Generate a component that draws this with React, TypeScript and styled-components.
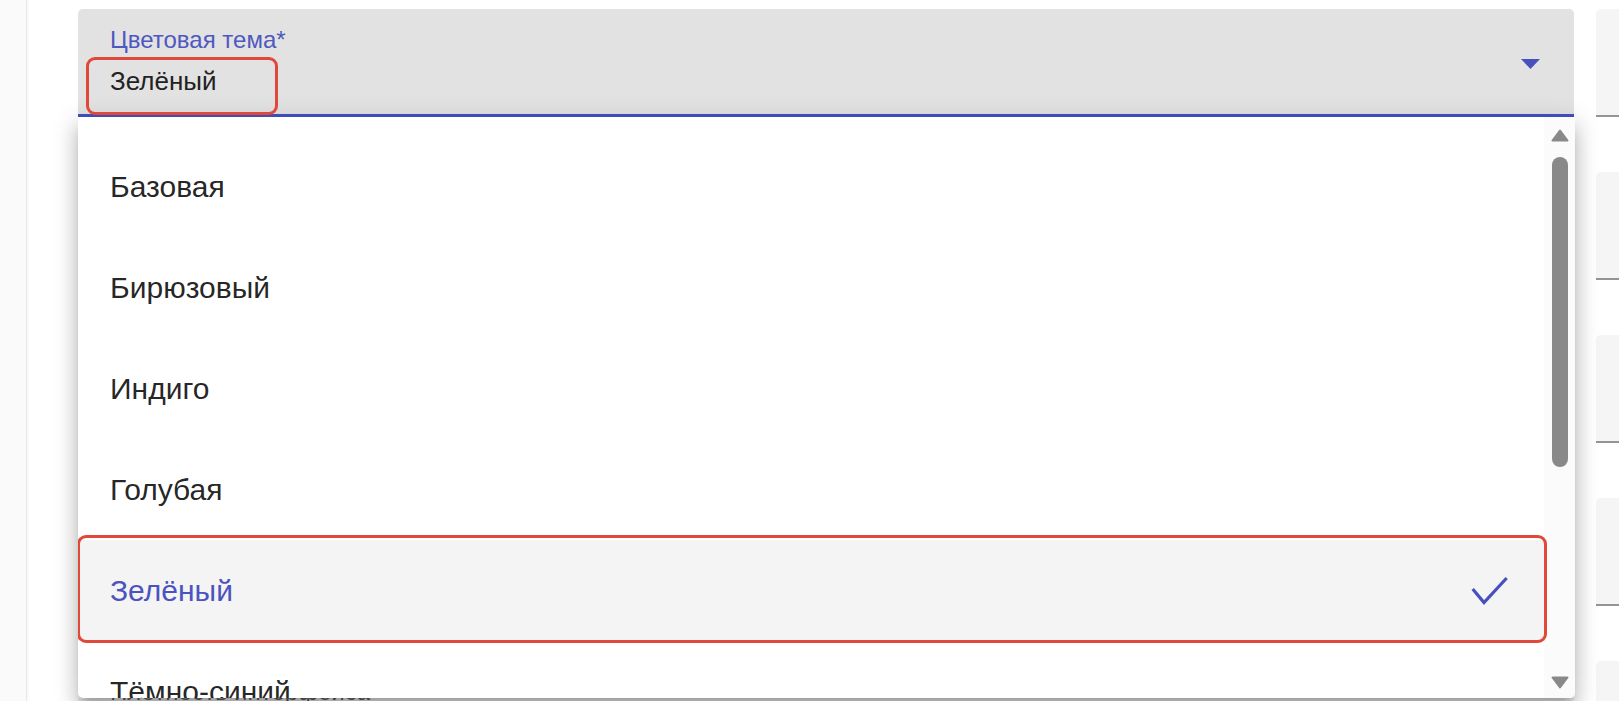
import React from "react";
import styled, { createGlobalStyle } from "styled-components";

const GlobalStyle = createGlobalStyle`
  html, body { margin: 0; padding: 0; background: #ffffff; }
  body { font-family: "Liberation Sans", Arial, sans-serif; overflow: hidden; }
  * { box-sizing: border-box; }
`;

const Page = styled.div`
  display: flex;
  width: 1619px;
  height: 701px;
  overflow: hidden;
  background: #ffffff;
`;

const Sidebar = styled.div`
  flex: 0 0 27px;
  background: #fafafa;
  border-right: 1px solid #e8e8e8;
  box-shadow: 1px 0 3px rgba(0, 0, 0, 0.05);
`;

const Content = styled.div`
  flex: 0 0 auto;
  padding: 9px 0 0 51px;
  display: grid;
  grid-template-columns: 1496px 1496px;
  grid-auto-rows: 108px;
  column-gap: 22px;
  row-gap: 55px;
  align-content: start;
  align-items: start;
`;

const Field = styled.div<{ $focused?: boolean }>`
  position: relative;
  height: 108px;
  display: flex;
  flex-direction: row;
  padding: 0 34px 3px 32px;
  background: ${(p) => (p.$focused ? "#e2e2e2" : "#f5f5f5")};
  border-radius: 5px 5px 0 0;
  z-index: ${(p) => (p.$focused ? 5 : 0)};

  &::after {
    content: "";
    position: absolute;
    left: 0;
    right: 0;
    bottom: 0;
    height: ${(p) => (p.$focused ? "3.5px" : "2px")};
    background: ${(p) => (p.$focused ? "#3f4db8" : "#949494")};
    z-index: 3;
  }
`;

const TextCol = styled.div`
  flex: 1;
  display: flex;
  flex-direction: column;
  padding-top: 20px;
`;

const Label = styled.div<{ $focused?: boolean }>`
  font-size: 24px;
  line-height: 22px;
  color: ${(p) => (p.$focused ? "#4f57c0" : "rgba(0,0,0,0.62)")};
  white-space: nowrap;
`;

const Value = styled.div`
  margin-top: 18px;
  font-size: 26px;
  line-height: 25px;
  color: #222222;
  white-space: nowrap;
`;

const ArrowIcon = styled.svg`
  flex: 0 0 auto;
  margin-top: 50px;
  width: 19px;
  height: 10px;
`;

const Annotation = styled.div`
  position: absolute;
  border: 3px solid #e0483a;
  border-radius: 9px;
  pointer-events: none;
  z-index: 4;
`;

const ValueMark = styled(Annotation)`
  left: 8px;
  top: 48px;
  width: 192px;
  height: 58px;
`;

const Menu = styled.div`
  position: absolute;
  top: 100%;
  left: 0;
  width: 1497px;
  height: 581px;
  display: flex;
  flex-direction: row;
  background: #ffffff;
  border-radius: 0 0 5px 5px;
  overflow: hidden;
  z-index: 1;
  box-shadow: 0 9px 9px -5px rgba(0, 0, 0, 0.2), 0 14px 18px 2px rgba(0, 0, 0, 0.14),
    0 5px 25px 4px rgba(0, 0, 0, 0.12);
`;

const List = styled.ul`
  flex: 1;
  margin: 0;
  padding: 19px 0 0 0;
  list-style: none;
`;

const Item = styled.li<{ $selected?: boolean }>`
  position: relative;
  height: 101px;
  display: flex;
  align-items: center;
  padding: 0 35px 0 32px;
  font-size: 30px;
  color: ${(p) => (p.$selected ? "#4b53bf" : "rgba(0,0,0,0.87)")};
  background: ${(p) => (p.$selected ? "#f4f4f4" : "transparent")};
  white-space: nowrap;
`;

const ItemText = styled.span`
  flex: 1;
`;

const ItemMark = styled(Annotation)`
  left: -1px;
  top: -5px;
  right: -3px;
  bottom: -2px;
`;

const CheckIcon = styled.svg`
  width: 38px;
  height: 30px;
  flex: 0 0 auto;
`;

const Scrollbar = styled.div`
  flex: 0 0 31px;
  display: flex;
  flex-direction: column;
  align-items: center;
  padding: 12px 0 9px 0;
  background: #fbfbfb;
`;

const ScrollArrow = styled.svg`
  width: 18px;
  height: 13px;
  flex: 0 0 auto;
`;

const Thumb = styled.div`
  margin-top: 15px;
  width: 16px;
  height: 310px;
  border-radius: 8px;
  background: #898989;
`;

const Spacer = styled.div`
  flex: 1;
`;

const options = ["Базовая", "Бирюзовый", "Индиго", "Голубая", "Зелёный", "Тёмно-синий"];
const selected = "Зелёный";

const leftFields = [
  { label: "Язык интерфейса*", value: "Русский" },
  { label: "Формат даты*", value: "ДД.ММ.ГГГГ" },
  { label: "Часовой пояс*", value: "Москва (UTC+3)" },
  { label: "Плотность интерфейса*", value: "Стандартная" },
];

const rightFields = [
  { label: "Шрифт*", value: "Roboto" },
  { label: "Размер шрифта*", value: "Средний" },
  { label: "Стартовая страница*", value: "Главная" },
  { label: "Уведомления*", value: "Включены" },
  { label: "Валюта*", value: "RUB" },
];

function PlainField({ label, value }: { label: string; value: string }) {
  return (
    <Field>
      <TextCol>
        <Label>{label}</Label>
        <Value>{value}</Value>
      </TextCol>
    </Field>
  );
}

export default function App() {
  return (
    <>
      <GlobalStyle />
      <Page>
        <Sidebar />
        <Content>
          <Field $focused>
            <TextCol>
              <Label $focused>Цветовая тема*</Label>
              <Value>{selected}</Value>
            </TextCol>
            <ArrowIcon viewBox="0 0 19 10">
              <polygon points="0,0 19,0 9.5,10" fill="#4750bd" />
            </ArrowIcon>
            <ValueMark />
            <Menu>
              <List>
                {options.map((o) => (
                  <Item key={o} $selected={o === selected}>
                    <ItemText>{o}</ItemText>
                    {o === selected && (
                      <>
                        <CheckIcon viewBox="0 0 38 30">
                          <polyline
                            points="1.7,13 13,26.5 35.7,2"
                            fill="none"
                            stroke="#4750bd"
                            strokeWidth="3.2"
                          />
                        </CheckIcon>
                        <ItemMark />
                      </>
                    )}
                  </Item>
                ))}
              </List>
              <Scrollbar>
                <ScrollArrow viewBox="0 0 18 13">
                  <polygon
                    points="9,1.5 16.5,11.5 1.5,11.5"
                    fill="#898989"
                    stroke="#898989"
                    strokeWidth="2"
                    strokeLinejoin="round"
                  />
                </ScrollArrow>
                <Thumb />
                <Spacer />
                <ScrollArrow viewBox="0 0 18 13">
                  <polygon
                    points="1.5,1.5 16.5,1.5 9,11.5"
                    fill="#898989"
                    stroke="#898989"
                    strokeWidth="2"
                    strokeLinejoin="round"
                  />
                </ScrollArrow>
              </Scrollbar>
            </Menu>
          </Field>
          <PlainField {...rightFields[0]} />
          {leftFields.map((f, i) => (
            <React.Fragment key={f.label}>
              <PlainField {...f} />
              <PlainField {...rightFields[i + 1]} />
            </React.Fragment>
          ))}
        </Content>
      </Page>
    </>
  );
}
